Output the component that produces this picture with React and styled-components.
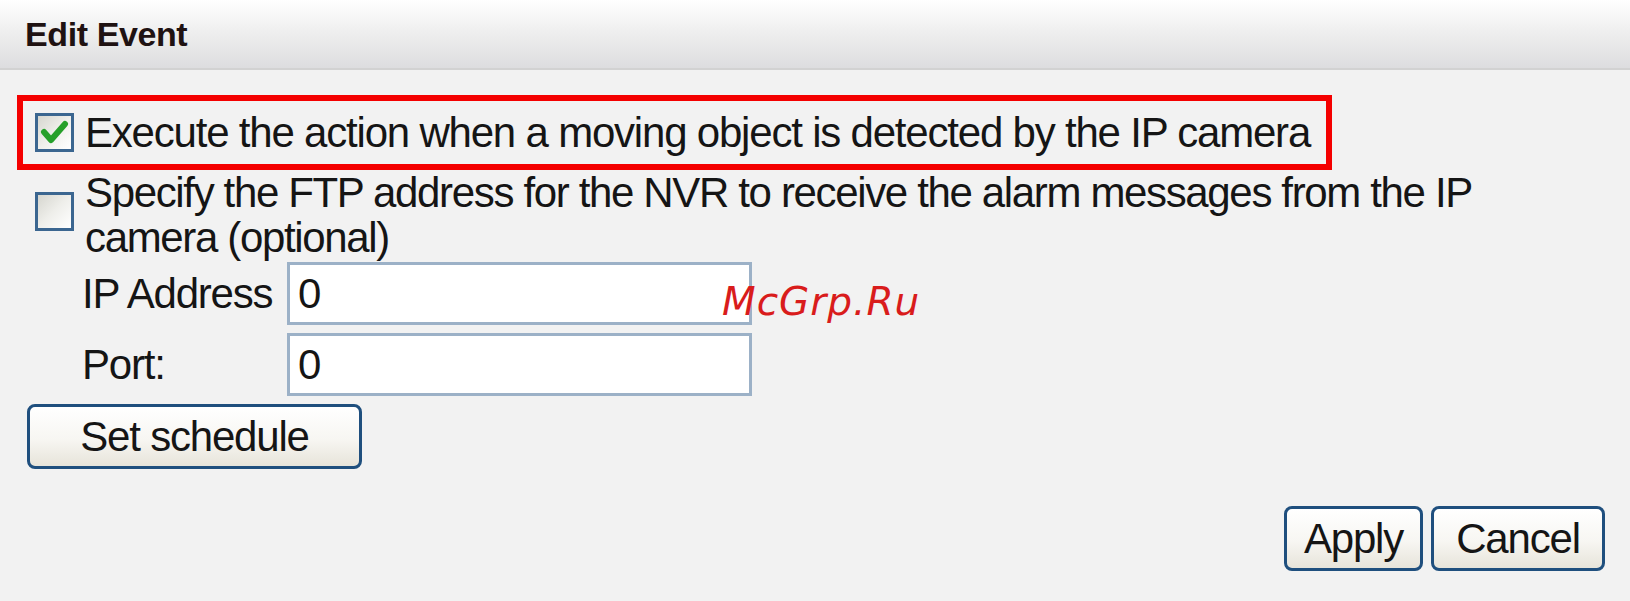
import React from "react";
import styled, { createGlobalStyle } from "styled-components";

const GlobalStyle = createGlobalStyle`
  html, body {
    margin: 0;
    padding: 0;
    background: #f2f2f2;
  }
  body {
    font-family: "Liberation Sans", Arial, sans-serif;
    color: #151515;
  }
`;

const Page = styled.div`
  width: 1630px;
  height: 601px;
  background: #f2f2f2;
  position: relative;
  overflow: hidden;
`;

const Header = styled.div`
  height: 70px;
  box-sizing: border-box;
  padding: 14px 0 0 25px;
  background: linear-gradient(to bottom, #ffffff 0%, #efefef 45%, #dddddf 100%);
  border-bottom: 2px solid #d2d2d2;
  font-size: 34px;
  line-height: 40px;
  font-weight: bold;
  letter-spacing: -0.4px;
  color: #1f1212;
`;

const Body = styled.div`
  padding: 25px 0 0 17px;
  display: flex;
  flex-direction: column;
`;

const Highlight = styled.div`
  width: 1315px;
  height: 75px;
  box-sizing: border-box;
  border: 6px solid #f40000;
  display: flex;
  align-items: center;
  padding-left: 12px;
`;

const OptionRow = styled.div`
  display: flex;
  align-items: ${(p) => (p.$top ? "flex-start" : "center")};
  gap: 11px;
`;

const Box = styled.span`
  flex: none;
  width: 39px;
  height: 39px;
  box-sizing: border-box;
  border: 3px solid #3b6690;
  background: linear-gradient(135deg, #d6d6cf 0%, #efefeb 50%, #ffffff 100%);
  display: flex;
  align-items: center;
  justify-content: center;
  margin-top: ${(p) => p.$offset || 0}px;
`;

const Label = styled.span`
  font-size: 42px;
  line-height: 45px;
  letter-spacing: ${(p) => (p.$wrap ? "-1.35px" : "-1.2px")};
  color: #151515;
  max-width: ${(p) => (p.$wrap ? "1390px" : "none")};
`;

const Second = styled(OptionRow)`
  padding-left: 18px;
`;

const Fields = styled.div`
  display: grid;
  grid-template-columns: 205px 465px;
  row-gap: 8px;
  padding-left: 65px;
  margin-top: 2px;
  align-items: center;
`;

const FieldLabel = styled.span`
  font-size: 42px;
  letter-spacing: -1.2px;
  color: #151515;
`;

const Input = styled.div`
  height: 63px;
  box-sizing: border-box;
  border: 3px solid #9cb1c7;
  background: #ffffff;
  font-size: 42px;
  padding: 0 0 0 8px;
  display: flex;
  align-items: center;
`;

const Button = styled.button`
  height: 65px;
  box-sizing: border-box;
  border: 3px solid #1f4f7e;
  border-radius: 8px;
  background: linear-gradient(to bottom, #ffffff 0%, #f7f6f2 55%, #e7e4da 100%);
  font-family: "Liberation Sans", Arial, sans-serif;
  font-size: 42px;
  letter-spacing: -1.2px;
  color: #151515;
  padding: 0;
  width: ${(p) => p.$w}px;
`;

const ScheduleRow = styled.div`
  padding-left: 10px;
  margin-top: 8px;
`;

const Footer = styled.div`
  display: flex;
  justify-content: flex-end;
  gap: 8px;
  padding-right: 25px;
  margin-top: 37px;
`;

const Watermark = styled.div`
  position: absolute;
  left: 722px;
  top: 279px;
  font-family: "DejaVu Sans", sans-serif;
  font-style: italic;
  font-size: 39px;
  letter-spacing: 1px;
  color: #d91c1c;
  pointer-events: none;
`;

const Check = () => (
  <svg width="33" height="33" viewBox="0 0 33 33">
    <path
      d="M6 16 L13 24 L27 8"
      fill="none"
      stroke="#26a02a"
      strokeWidth="6"
      strokeLinecap="round"
      strokeLinejoin="round"
    />
  </svg>
);

export default function App() {
  return (
    <Page>
      <GlobalStyle />
      <Header>Edit Event</Header>
      <Body>
        <Highlight>
          <OptionRow>
            <Box>
              <Check />
            </Box>
            <Label>Execute the action when a moving object is detected by the IP camera</Label>
          </OptionRow>
        </Highlight>
        <Second $top>
          <Box $offset={22} />
          <Label $wrap>
            Specify the FTP address for the NVR to receive the alarm messages from the IP camera (optional)
          </Label>
        </Second>
        <Fields>
          <FieldLabel>IP Address</FieldLabel>
          <Input>0</Input>
          <FieldLabel>Port:</FieldLabel>
          <Input>0</Input>
        </Fields>
        <ScheduleRow>
          <Button $w={335}>Set schedule</Button>
        </ScheduleRow>
        <Footer>
          <Button $w={139}>Apply</Button>
          <Button $w={174}>Cancel</Button>
        </Footer>
      </Body>
      <Watermark>McGrp.Ru</Watermark>
    </Page>
  );
}
